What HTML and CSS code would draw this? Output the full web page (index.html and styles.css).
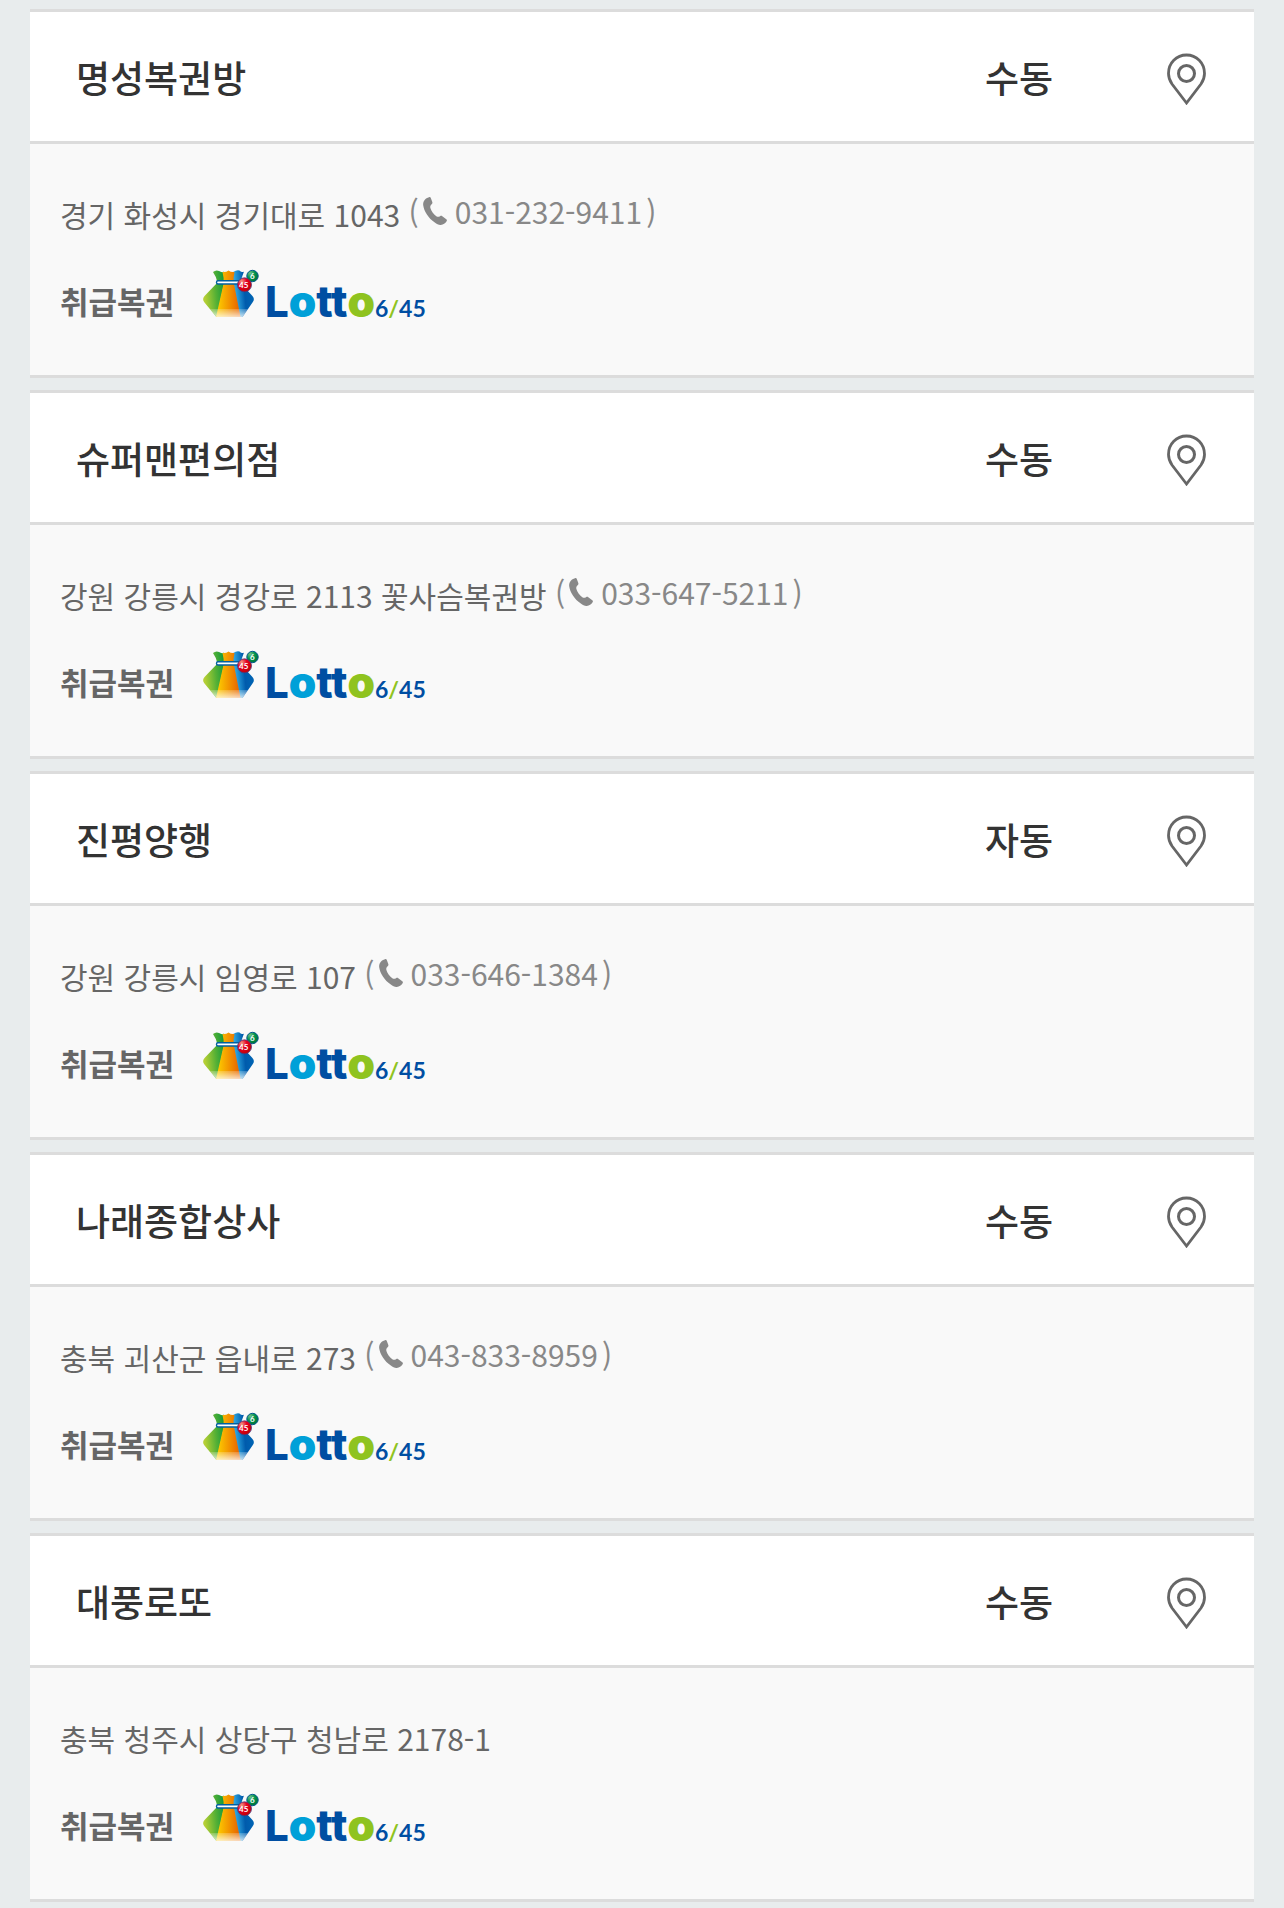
FILE: index.html
```html
<!DOCTYPE html>
<html lang="ko">
<head>
    <meta charset="UTF-8">
    <meta name="viewport" content="width=device-width, initial-scale=1.0">
    <title>복권 판매점</title>
    <link rel="stylesheet" href="styles.css">
</head>
<body>
    <!-- shared icons -->
    <svg class="sprite" aria-hidden="true">
        <defs>
            <linearGradient id="bag-green" x1="0" x2="1" y1="0.2" y2="0">
                <stop offset="0" stop-color="#b5cf35"/>
                <stop offset="0.5" stop-color="#55b035"/>
                <stop offset="0.9" stop-color="#159b3c"/>
            </linearGradient>
            <linearGradient id="bag-orange" x1="0" x2="1" y1="0" y2="0">
                <stop offset="0.1" stop-color="#fcc800"/>
                <stop offset="0.5" stop-color="#f39800"/>
                <stop offset="0.9" stop-color="#e86a00"/>
            </linearGradient>
            <linearGradient id="bag-blue" x1="0" x2="1" y1="0.2" y2="0">
                <stop offset="0.1" stop-color="#2ea7e0"/>
                <stop offset="0.5" stop-color="#005bac"/>
                <stop offset="1" stop-color="#0068b7"/>
            </linearGradient>
            <linearGradient id="bag-fade" x1="0" x2="0" y1="0" y2="1">
                <stop offset="0" stop-color="#fff" stop-opacity="0.2"/>
                <stop offset="1" stop-color="#fff" stop-opacity="0.75"/>
            </linearGradient>
            <radialGradient id="ball-red" cx="0.3" cy="0.25" r="0.7">
                <stop offset="0" stop-color="#f29a86"/>
                <stop offset="0.5" stop-color="#e60020"/>
                <stop offset="1" stop-color="#c7000b"/>
            </radialGradient>
            <radialGradient id="ball-green" cx="0.3" cy="0.25" r="0.7">
                <stop offset="0" stop-color="#6fc08a"/>
                <stop offset="0.6" stop-color="#00924a"/>
                <stop offset="1" stop-color="#007a3d"/>
            </radialGradient>
        </defs>
        <symbol id="icon-pin" viewBox="0 -4 40 56">
            <path d="M19.500 50 L5 31 C2.600 27.600 1.500 24.500 1.500 20.500 C1.500 10 9.500 2 19.500 2 C29.500 2 37.500 10 37.500 20.500 C37.500 24.500 36.400 27.600 34 31 Z" fill="none" stroke="#666" stroke-width="2.800"/>
            <circle cx="19.500" cy="20.500" r="8" fill="none" stroke="#666" stroke-width="3"/>
        </symbol>
        <symbol id="icon-phone" viewBox="0 0 24 28">
            <path d="M6 0.200 C7 -0.100 7.500 0.200 7.800 1 L9.300 5 C9.600 6 9.400 6.600 8.700 7.200 C7.500 8.200 7 9.300 7.400 11 C8.200 14.200 10.500 17.300 13.300 19.200 C14.600 20 15.700 20 17 19.200 C17.900 18.600 18.500 18.600 19.300 19.200 L23.300 22.300 C24 22.900 24.100 23.500 23.600 24.200 C22.200 26.300 20.400 27.600 17.800 27.900 C15.600 28 13.700 27 11.800 25.600 C5.500 21 1 14.500 0.200 8.200 C-0.200 4.500 2 1.400 6 0.200 Z" fill="#888"/>
        </symbol>
        <symbol id="lotto-bag" viewBox="0 0 60 52">
            <path d="M13 4 Q16 1.500 19 3 Q22 5 24 3.500 L25 14 L23.500 18 L17 49 L16 48.500 L4.500 34.500 Q1.500 31 5 27.500 L17.500 14.500 Q16.500 9 13 4 Z" fill="url(#bag-green)"/>
            <path d="M33 14 L33 4 Q37 1.500 39.500 2.500 Q42 5 44 3.500 Q42 9 40 14.500 L52 27.500 Q55.500 31 52.500 34.500 L42.500 49 L37 49 L32 18 Z" fill="url(#bag-blue)"/>
            <path d="M22.500 4 Q26 4.500 28.500 2.500 Q31 4.500 34.500 4 Q33 9 34 16 L40.500 49 L16 49 L23.500 16 Q24 9 22.500 4 Z" fill="url(#bag-orange)"/>
            <path d="M9.800 41 L48 41 L42.500 49 L16.500 49 Z" fill="url(#bag-fade)"/>
            <rect x="16.500" y="12.800" width="24" height="3.200" rx="1.500" fill="#fff" stroke="#0060a0" stroke-width="1.400"/>
            <circle cx="52.500" cy="8" r="5.700" fill="url(#ball-green)" stroke="#005a8e" stroke-width="1"/>
            <circle cx="44.500" cy="16.800" r="7" fill="url(#ball-red)" stroke="#4a3a7e" stroke-width="0.800"/>
        </symbol>
    </svg>

    <ul class="store-list">
        <li class="store">
            <div class="store-head">
                <h2 class="store-name">명성복권방</h2>
                <span class="store-type">수동</span>
                <a class="store-map" href="#map" aria-label="지도 보기"><svg class="pin"><use href="#icon-pin"/></svg></a>
            </div>
            <div class="store-body">
                <p class="address">경기 화성시 경기대로 1043 <span class="tel">(<a href="tel:031-232-9411"><svg class="phone"><use href="#icon-phone"/></svg>031-232-9411</a>)</span></p>
                <div class="games">
                    <strong>취급복권</strong>
                    <svg class="lotto" viewBox="0 0 226 52">
                        <use href="#lotto-bag" width="60" height="52"/>
                        <text class="logo-ball" x="39" y="20">45</text>
                        <text class="logo-ball" x="50" y="11">6</text>
                        <text class="logo-word" x="65" y="49"><tspan class="logo-cap">L</tspan><tspan class="logo-cyan">o</tspan><tspan class="logo-tt">tt</tspan><tspan class="logo-lime">o</tspan></text>
                        <text class="logo-num" x="175" y="49">6<tspan class="logo-lime">/</tspan>45</text>
                    </svg>
                </div>
            </div>
        </li>
        <li class="store">
            <div class="store-head">
                <h2 class="store-name">슈퍼맨편의점</h2>
                <span class="store-type">수동</span>
                <a class="store-map" href="#map" aria-label="지도 보기"><svg class="pin"><use href="#icon-pin"/></svg></a>
            </div>
            <div class="store-body">
                <p class="address">강원 강릉시 경강로 2113 꽃사슴복권방 <span class="tel">(<a href="tel:033-647-5211"><svg class="phone"><use href="#icon-phone"/></svg>033-647-5211</a>)</span></p>
                <div class="games">
                    <strong>취급복권</strong>
                    <svg class="lotto" viewBox="0 0 226 52">
                        <use href="#lotto-bag" width="60" height="52"/>
                        <text class="logo-ball" x="39" y="20">45</text>
                        <text class="logo-ball" x="50" y="11">6</text>
                        <text class="logo-word" x="65" y="49"><tspan class="logo-cap">L</tspan><tspan class="logo-cyan">o</tspan><tspan class="logo-tt">tt</tspan><tspan class="logo-lime">o</tspan></text>
                        <text class="logo-num" x="175" y="49">6<tspan class="logo-lime">/</tspan>45</text>
                    </svg>
                </div>
            </div>
        </li>
        <li class="store">
            <div class="store-head">
                <h2 class="store-name">진평양행</h2>
                <span class="store-type">자동</span>
                <a class="store-map" href="#map" aria-label="지도 보기"><svg class="pin"><use href="#icon-pin"/></svg></a>
            </div>
            <div class="store-body">
                <p class="address">강원 강릉시 임영로 107 <span class="tel">(<a href="tel:033-646-1384"><svg class="phone"><use href="#icon-phone"/></svg>033-646-1384</a>)</span></p>
                <div class="games">
                    <strong>취급복권</strong>
                    <svg class="lotto" viewBox="0 0 226 52">
                        <use href="#lotto-bag" width="60" height="52"/>
                        <text class="logo-ball" x="39" y="20">45</text>
                        <text class="logo-ball" x="50" y="11">6</text>
                        <text class="logo-word" x="65" y="49"><tspan class="logo-cap">L</tspan><tspan class="logo-cyan">o</tspan><tspan class="logo-tt">tt</tspan><tspan class="logo-lime">o</tspan></text>
                        <text class="logo-num" x="175" y="49">6<tspan class="logo-lime">/</tspan>45</text>
                    </svg>
                </div>
            </div>
        </li>
        <li class="store">
            <div class="store-head">
                <h2 class="store-name">나래종합상사</h2>
                <span class="store-type">수동</span>
                <a class="store-map" href="#map" aria-label="지도 보기"><svg class="pin"><use href="#icon-pin"/></svg></a>
            </div>
            <div class="store-body">
                <p class="address">충북 괴산군 읍내로 273 <span class="tel">(<a href="tel:043-833-8959"><svg class="phone"><use href="#icon-phone"/></svg>043-833-8959</a>)</span></p>
                <div class="games">
                    <strong>취급복권</strong>
                    <svg class="lotto" viewBox="0 0 226 52">
                        <use href="#lotto-bag" width="60" height="52"/>
                        <text class="logo-ball" x="39" y="20">45</text>
                        <text class="logo-ball" x="50" y="11">6</text>
                        <text class="logo-word" x="65" y="49"><tspan class="logo-cap">L</tspan><tspan class="logo-cyan">o</tspan><tspan class="logo-tt">tt</tspan><tspan class="logo-lime">o</tspan></text>
                        <text class="logo-num" x="175" y="49">6<tspan class="logo-lime">/</tspan>45</text>
                    </svg>
                </div>
            </div>
        </li>
        <li class="store">
            <div class="store-head">
                <h2 class="store-name">대풍로또</h2>
                <span class="store-type">수동</span>
                <a class="store-map" href="#map" aria-label="지도 보기"><svg class="pin"><use href="#icon-pin"/></svg></a>
            </div>
            <div class="store-body">
                <p class="address">충북 청주시 상당구 청남로 2178-1</p>
                <div class="games">
                    <strong>취급복권</strong>
                    <svg class="lotto" viewBox="0 0 226 52">
                        <use href="#lotto-bag" width="60" height="52"/>
                        <text class="logo-ball" x="39" y="20">45</text>
                        <text class="logo-ball" x="50" y="11">6</text>
                        <text class="logo-word" x="65" y="49"><tspan class="logo-cap">L</tspan><tspan class="logo-cyan">o</tspan><tspan class="logo-tt">tt</tspan><tspan class="logo-lime">o</tspan></text>
                        <text class="logo-num" x="175" y="49">6<tspan class="logo-lime">/</tspan>45</text>
                    </svg>
                </div>
            </div>
        </li>
    </ul>
</body>
</html>
```

FILE: styles.css
```css
* {
    box-sizing: border-box;
    margin: 0;
    padding: 0;
}

body {
    font-family: "Noto Sans CJK KR", sans-serif;
    background-color: #e8eced;
    color: #333;
}

a {
    color: inherit;
    text-decoration: none;
}

.sprite {
    position: absolute;
    width: 0;
    height: 0;
}

.store-list {
    display: flex;
    flex-direction: column;
    gap: 12px;
    padding: 9px 30px 7px;
    list-style: none;
}

.store {
    border-top: 3px solid #dcdcdc;
    border-bottom: 3px solid #dcdcdc;
    background-color: #f9f9f9;
}

.store-head {
    display: grid;
    grid-template-columns: 1fr 202px 134px;
    align-items: center;
    padding: 35px 0 34px 46px;
    border-bottom: 3px solid #dcdcdc;
    background-color: #fff;
    line-height: 60px;
}

.store-name,
.store-type {
    font-size: 37px;
    font-weight: 500;
}

.store-type {
    text-align: center;
}

.store-map {
    display: flex;
    justify-content: center;
}

.pin {
    width: 40px;
    height: 56px;
}

.store-body {
    padding: 46px 30px 55px;
    color: #666;
}

.address {
    font-size: 30px;
    line-height: 48px;
}

.tel,
.tel a {
    display: inline-flex;
    align-items: center;
}

.tel {
    gap: 4px;
    color: #888;
    line-height: 42px;
    vertical-align: top;
}

.tel a {
    gap: 8px;
}

.phone {
    width: 24px;
    height: 28px;
}

.games {
    display: flex;
    align-items: flex-end;
    gap: 26px;
    margin-top: 30px;
    font-size: 31px;
    line-height: 38px;
}

.lotto {
    width: 226px;
    height: 52px;
    overflow: visible;
}

/* logo lettering */
.logo-word {
    font: 900 44px Inter, sans-serif;
    fill: #004ea2;
}

.logo-cap {
    font-size: 42px;
    font-weight: 800;
}

.logo-tt {
    font-size: 43px;
    font-weight: 800;
}

.logo-num {
    font: 700 23px Lato, sans-serif;
    fill: #004ea2;
}

.logo-ball {
    font: 700 8px Lato, sans-serif;
    fill: #fff;
}

.logo-cyan {
    fill: #00a0d8;
}

.logo-lime {
    fill: #8fc31f;
}
```
